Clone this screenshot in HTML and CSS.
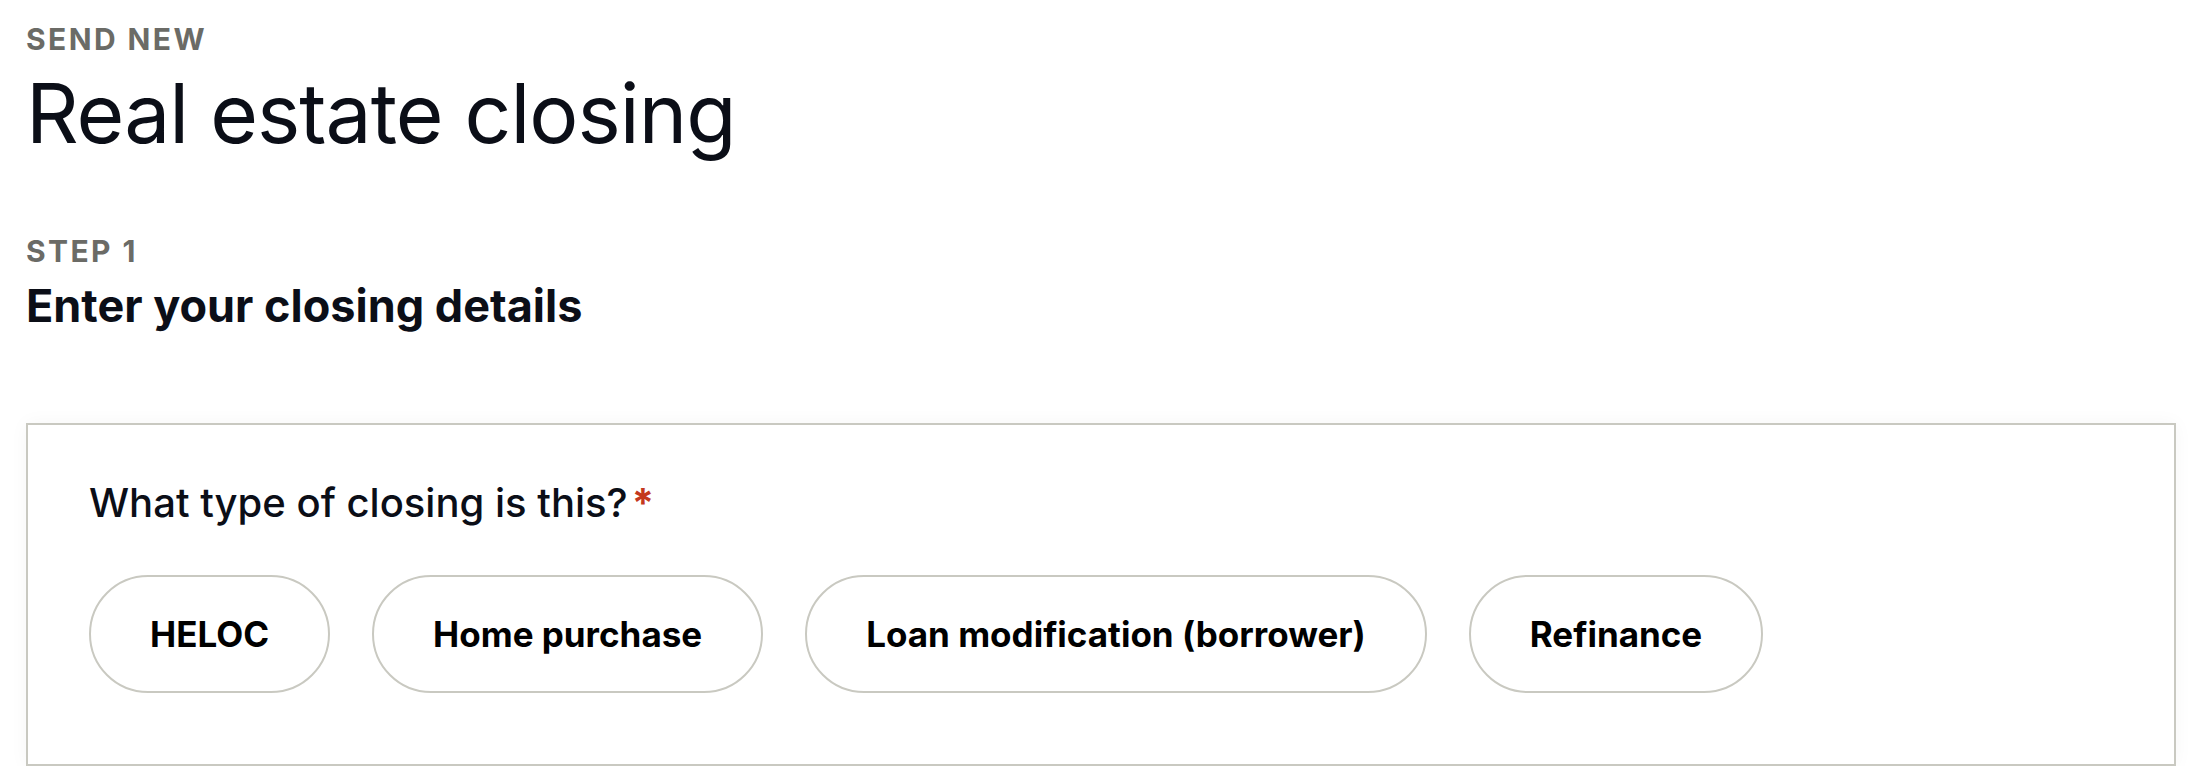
FILE: index.html
```html
<!DOCTYPE html>
<html lang="en">
<head>
  <meta charset="UTF-8">
  <title>Send new – Real estate closing</title>
  <link rel="stylesheet" href="styles.css">
</head>
<body>

  <main class="page">
    <header class="page-head">
      <div class="eyebrow">Send new</div>
      <h1 class="page-title">Real estate closing</h1>
    </header>

    <section class="step">
      <div class="eyebrow">Step 1</div>
      <h2 class="step-title">Enter your closing details</h2>

      <div class="card">
        <div class="question">What type of closing is this?<span class="required">*</span></div>
        <div class="choices">
          <button class="choice">HELOC</button>
          <button class="choice">Home purchase</button>
          <button class="choice">Loan modification (borrower)</button>
          <button class="choice">Refinance</button>
        </div>
      </div>
    </section>
  </main>

</body>
</html>
```

FILE: styles.css
```css
* { margin: 0; padding: 0; box-sizing: border-box; }

body {
  font-family: Inter, "Noto Sans", Arial, sans-serif;
  background-color: #fff;
  color: #0b0e17;
}

.page {
  padding: 21px 20px 0 26px;
}

.eyebrow {
  font-size: 30px;
  line-height: 36px;
  font-weight: 700;
  letter-spacing: 0.08em;
  text-transform: uppercase;
  color: #6b6b66;
}

.page-title {
  margin-top: 8px;
  font-size: 82px;
  line-height: 98px;
  font-weight: 400;
  letter-spacing: -0.012em;
}

.step {
  margin-top: 70px;
}

.step-title {
  margin-top: 10px;
  font-size: 45px;
  line-height: 54px;
  font-weight: 700;
}

.card {
  margin-top: 90px;
  padding: 54px 61px 71px;
  border: 2px solid #c9c9c1;
  background-color: #fff;
  box-shadow: 0 0 18px rgba(0, 0, 0, 0.04);
}

.question {
  font-size: 40px;
  line-height: 48px;
  font-weight: 500;
}

.required {
  margin-left: 4px;
  font-weight: 700;
  color: #c4391d;
}

.choices {
  display: flex;
  gap: 42px;
  margin-top: 48px;
}

.choice {
  height: 118px;
  padding: 0 59px;
  border: 2px solid #c9c9c1;
  border-radius: 59px;
  background-color: #fff;
  font-family: inherit;
  font-size: 35px;
  font-weight: 700;
  color: #000;
  cursor: pointer;
}
```
